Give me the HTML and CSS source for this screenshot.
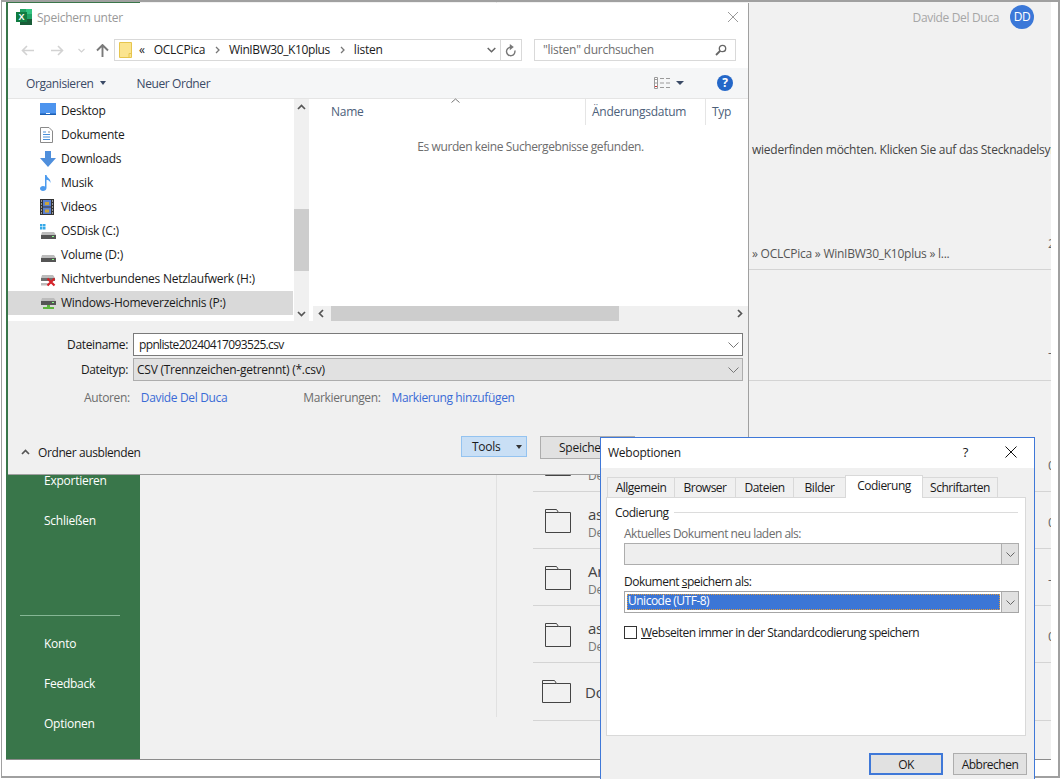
FILE: index.html
```html
<!DOCTYPE html>
<html lang="de">
<head>
    <meta charset="UTF-8">
    <meta name="viewport" content="width=device-width, initial-scale=1.0">
    <title>Speichern unter</title>
    <link rel="stylesheet" href="styles.css">
</head>
<body>
<div class="desktop">
    <div class="screen-frame"></div>

    <!-- Excel Backstage hinter den Dialogen -->
    <div class="backstage">
        <aside class="side">
            <div class="side-top">
                <a class="side-link">Exportieren</a>
                <a class="side-link">Schließen</a>
            </div>
            <div class="side-bottom">
                <a class="side-link">Konto</a>
                <a class="side-link">Feedback</a>
                <a class="side-link">Optionen</a>
            </div>
        </aside>
        <main class="main">
            <div class="places"></div>
            <div class="recent">
                <div class="account">
                    <span class="account-name">Davide Del Duca</span>
                    <span class="avatar">DD</span>
                </div>
                <p class="hint">wiederfinden möchten. Klicken Sie auf das Stecknadelsymbol</p>
                <div class="row row-path">
                    <span class="path">» OCLCPica » WinIBW30_K10plus » l...</span>
                    <span class="date">23.04.2024</span>
                </div>
                <div class="row row-tall"><span class="date">- -</span></div>
                <div class="row row-gap"></div>
                <div class="row">
                    <svg class="folder" viewBox="0 0 26 24"><path d="M.5 23.5V.5h11l2 3h12v20z" fill="none" stroke="#444"/><path d="M.5 3.5h13" stroke="#444"/></svg>
                    <div class="row-text"><div class="row-name">as</div><div class="row-meta">De</div></div>
                    <span class="date">04.04.2024</span>
                </div>
                <div class="row">
                    <svg class="folder" viewBox="0 0 26 24"><path d="M.5 23.5V.5h11l2 3h12v20z" fill="none" stroke="#444"/><path d="M.5 3.5h13" stroke="#444"/></svg>
                    <div class="row-text"><div class="row-name">as</div><div class="row-meta">De</div></div>
                    <span class="date">04.04.2024</span>
                </div>
                <div class="row">
                    <svg class="folder" viewBox="0 0 26 24"><path d="M.5 23.5V.5h11l2 3h12v20z" fill="none" stroke="#444"/><path d="M.5 3.5h13" stroke="#444"/></svg>
                    <div class="row-text"><div class="row-name">Ar</div><div class="row-meta">De</div></div>
                    <span class="date">- -</span>
                </div>
                <div class="row">
                    <svg class="folder" viewBox="0 0 26 24"><path d="M.5 23.5V.5h11l2 3h12v20z" fill="none" stroke="#444"/><path d="M.5 3.5h13" stroke="#444"/></svg>
                    <div class="row-text"><div class="row-name">as</div><div class="row-meta">De</div></div>
                    <span class="date">04.04.2024</span>
                </div>
                <div class="row row-last">
                    <svg class="folder folder-big" viewBox="0 0 29 23"><path d="M.5 22.5V.5h12l2 3h14v19z" fill="none" stroke="#444"/><path d="M.5 3.5h14" stroke="#444"/></svg>
                    <div class="row-name">Do</div>
                </div>
            </div>
        </main>
    </div>

    <!-- Speichern unter -->
    <section class="save-dialog">
        <header class="save-title">
            <svg class="excel-icon" width="16" height="16" viewBox="0 0 16 16">
                <rect x="4" y="0" width="12" height="16" fill="#21a366"/>
                <rect x="10" y="0" width="6" height="5" fill="#33c481"/>
                <rect x="4" y="10" width="12" height="6" fill="#185c37"/>
                <rect x="0" y="3" width="11" height="10" fill="#107c41"/>
                <text x="5.5" y="11.2" text-anchor="middle" class="excel-x">X</text>
            </svg>
            <span class="save-title-text">Speichern unter</span>
            <svg class="close-light" width="12" height="12" viewBox="0 0 12 12"><path d="M1 1l10 10M11 1L1 11" stroke="#9a9a9a" fill="none"/></svg>
        </header>

        <div class="nav-bar">
            <div class="nav-buttons">
                <svg width="13" height="11" viewBox="0 0 13 11"><path d="M6 1L1.500 5.500 6 10M2 5.500h11" stroke="#d2d2d2" stroke-width="1.600" fill="none"/></svg>
                <svg width="13" height="11" viewBox="0 0 13 11"><path d="M7 1l4.500 4.500L7 10M11 5.500H0" stroke="#d2d2d2" stroke-width="1.600" fill="none"/></svg>
                <svg width="7" height="5" viewBox="0 0 7 5"><path d="M.5 1l3 3 3-3" stroke="#d2d2d2" stroke-width="1.200" fill="none"/></svg>
                <svg width="13" height="13" viewBox="0 0 13 13"><path d="M1 6.500l5.500-5.500 5.500 5.500M6.500 1.500V13" stroke="#7a7a7a" stroke-width="1.900" fill="none"/></svg>
            </div>
            <div class="address">
                <svg class="address-folder" width="13" height="16" viewBox="0 0 13 16"><path d="M.5.500h12v15H.5z" fill="#fbe48f" stroke="#e6c54e"/><path d="M10 15.500v-4h2.500" fill="none" stroke="#e6c54e"/></svg>
                <span class="crumb-more">«</span>
                <span class="crumb">OCLCPica</span>
                <svg class="crumb-sep" width="5" height="8" viewBox="0 0 5 8"><path d="M1 1l3 3-3 3" stroke="#777" stroke-width="1.300" fill="none"/></svg>
                <span class="crumb crumb-long">WinIBW30_K10plus</span>
                <svg class="crumb-sep" width="5" height="8" viewBox="0 0 5 8"><path d="M1 1l3 3-3 3" stroke="#777" stroke-width="1.300" fill="none"/></svg>
                <span class="crumb">listen</span>
                <svg class="address-drop" width="9" height="6" viewBox="0 0 9 6"><path d="M.7 1l3.800 3.800L8.300 1" stroke="#666" stroke-width="1.500" fill="none"/></svg>
                <span class="address-refresh">
                    <svg width="12" height="13" viewBox="0 0 12 13"><path d="M9.800 6.500A4.200 4.200 0 1 1 5.600 3.300" stroke="#777" stroke-width="1.400" fill="none"/><path d="M4.800 0l4 3.100-4 3.100z" fill="#777"/></svg>
                </span>
            </div>
            <div class="search">
                <span class="search-text">"listen" durchsuchen</span>
                <svg width="12" height="12" viewBox="0 0 12 12"><circle cx="7.500" cy="4.500" r="3.200" stroke="#666" stroke-width="1.300" fill="none"/><path d="M5 7L1 11" stroke="#666" stroke-width="1.800"/></svg>
            </div>
        </div>

        <div class="toolbar">
            <span class="tool-item">Organisieren<span class="caret"></span></span>
            <span class="tool-item tool-new">Neuer Ordner</span>
            <svg class="view-icon" width="16" height="12" viewBox="0 0 16 12">
                <path d="M.5.500h3v11h-3z" fill="#fff" stroke="#9a9a9a"/>
                <path d="M1 2.500h2M1 6h2" stroke="#9a9a9a"/><path d="M1 9.500h2" stroke="#c33"/>
                <path d="M6 1.500h4M12 1.500h4M6 6h4M12 6h4M6 10.500h4M12 10.500h4" stroke="#9a9a9a"/>
            </svg>
            <span class="caret caret-view"></span>
            <span class="help">?</span>
        </div>

        <div class="browser">
            <nav class="tree">
                <div class="tree-row">
                    <svg width="16" height="12" viewBox="0 0 16 12"><rect width="16" height="11" fill="#4d94ee"/><rect y="10.500" width="16" height="1.500" fill="#1d5fb3"/><rect x="6" y="10" width="4" height="1" fill="#fff"/></svg>
                    <span>Desktop</span>
                </div>
                <div class="tree-row">
                    <svg width="13" height="16" viewBox="0 0 13 16"><path d="M.5.500h8.500l3.500 3.500v11.500H.5z" fill="#fff" stroke="#8a8a8a"/><path d="M3 5h3M3 7.500h7M3 10h7M3 12.500h7" stroke="#4a90d9"/><path d="M8 5h2" stroke="#8a8a8a"/></svg>
                    <span>Dokumente</span>
                </div>
                <div class="tree-row">
                    <svg width="16" height="16" viewBox="0 0 16 16"><path d="M5 0h6v7h5l-8 9-8-9h5z" fill="#4f8fdc"/></svg>
                    <span>Downloads</span>
                </div>
                <div class="tree-row">
                    <svg width="12" height="16" viewBox="0 0 12 16"><path d="M5 0h1.500c.5 3 4.500 3.500 4 8-.8-2.500-2.500-3-4-3.300V13c0 2-1.800 3-3.500 3S0 15 0 13.500 1.500 11 3 11c.8 0 1.500.2 2 .5z" fill="#4d9bee"/></svg>
                    <span>Musik</span>
                </div>
                <div class="tree-row">
                    <svg width="14" height="16" viewBox="0 0 14 16"><rect width="14" height="16" fill="#333"/><rect x="3" y="1" width="8" height="6.500" fill="#5a7fd0"/><rect x="3" y="8.500" width="8" height="6.500" fill="#5a7fd0"/><path d="M5 3h4v3H5zM5 10.500h4v3H5z" fill="#c9a33b"/><path d="M1 2h1M1 5h1M1 8h1M1 11h1M1 14h1M12 2h1M12 5h1M12 8h1M12 11h1M12 14h1" stroke="#fff"/></svg>
                    <span>Videos</span>
                </div>
                <div class="tree-row">
                    <svg width="16" height="16" viewBox="0 0 16 16"><path d="M0 1h2.500v2.500H0zM3 1h2.500v2.500H3zM0 4h2.500v2.500H0zM3 4h2.500v2.500H3z" fill="#35a9e8"/><path d="M2 9h12l2 3H1z" fill="#bcbcbc"/><rect x="1" y="12" width="15" height="4" fill="#555"/><rect x="12" y="13" width="2" height="1" fill="#8f8"/></svg>
                    <span>OSDisk (C:)</span>
                </div>
                <div class="tree-row">
                    <svg width="16" height="16" viewBox="0 0 16 16"><path d="M2 8h12l2 3H1z" fill="#bcbcbc"/><rect x="1" y="11" width="15" height="4" fill="#555"/><rect x="12" y="12" width="2" height="1" fill="#8f8"/></svg>
                    <span>Volume (D:)</span>
                </div>
                <div class="tree-row">
                    <svg width="16" height="16" viewBox="0 0 16 16"><path d="M2 4h11l2 3H1z" fill="#bcbcbc"/><rect x="1" y="7" width="14" height="3" fill="#6e6e6e"/><rect x="1" y="12" width="8" height="2.500" fill="#bcbcbc"/><path d="M7.500 7.500l7 7M14.500 7.500l-7 7" stroke="#d5232a" stroke-width="2.200"/></svg>
                    <span>Nichtverbundenes Netzlaufwerk (H:)</span>
                </div>
                <div class="tree-row tree-row-on">
                    <svg width="16" height="16" viewBox="0 0 16 16"><path d="M2 3h12l2 3H1z" fill="#bcbcbc"/><rect x="1" y="6" width="15" height="4" fill="#555"/><rect x="12" y="7" width="2" height="1" fill="#8f8"/><path d="M7 10h3v2h4v2H3v-2h4z" fill="#5db53e"/></svg>
                    <span>Windows-Homeverzeichnis (P:)</span>
                </div>
            </nav>
            <div class="vscroll">
                <svg class="vscroll-up" width="9" height="6" viewBox="0 0 9 6"><path d="M1 5l3.500-3.500L8 5" stroke="#555" stroke-width="1.700" fill="none"/></svg>
                <div class="vscroll-thumb"></div>
                <svg class="vscroll-down" width="9" height="6" viewBox="0 0 9 6"><path d="M1 1l3.500 3.500L8 1" stroke="#555" stroke-width="1.700" fill="none"/></svg>
            </div>
            <div class="list">
                <div class="list-head">
                    <span class="col col-name">Name<svg class="sort" width="9" height="5" viewBox="0 0 9 5"><path d="M.5 4.500l4-3.500 4 3.500" stroke="#777" fill="none"/></svg></span>
                    <span class="col col-date">Änderungsdatum</span>
                    <span class="col col-type">Typ</span>
                </div>
                <p class="list-empty">Es wurden keine Suchergebnisse gefunden.</p>
                <div class="hscroll">
                    <svg width="6" height="9" viewBox="0 0 6 9"><path d="M5 1L1.500 4.500 5 8" stroke="#555" stroke-width="1.700" fill="none"/></svg>
                    <div class="hscroll-track"><div class="hscroll-thumb"></div></div>
                    <svg width="6" height="9" viewBox="0 0 6 9"><path d="M1 1l3.500 3.500L1 8" stroke="#555" stroke-width="1.700" fill="none"/></svg>
                </div>
            </div>
        </div>

        <div class="save-form">
            <div class="form-row">
                <label class="form-label">Dateiname:</label>
                <div class="file-input"><span class="file-name">ppnliste20240417093525.csv</span>
                    <svg width="11" height="6" viewBox="0 0 11 6"><path d="M.5.500l5 5 5-5" stroke="#777" fill="none"/></svg>
                </div>
            </div>
            <div class="form-row">
                <label class="form-label">Dateityp:</label>
                <div class="file-input file-type">CSV (Trennzeichen-getrennt) (*.csv)
                    <svg width="11" height="6" viewBox="0 0 11 6"><path d="M.5.500l5 5 5-5" stroke="#777" fill="none"/></svg>
                </div>
            </div>
            <div class="meta-row">
                <span class="meta-label">Autoren:</span>
                <a class="meta-link">Davide Del Duca</a>
                <span class="meta-label meta-tags">Markierungen:</span>
                <a class="meta-link">Markierung hinzufügen</a>
            </div>
            <div class="save-foot">
                <span class="toggle-folders">
                    <svg width="9" height="6" viewBox="0 0 9 6"><path d="M1 5l3.500-3.500L8 5" stroke="#555" stroke-width="1.700" fill="none"/></svg>
                    Ordner ausblenden
                </span>
                <button class="btn-tools">Tools<span class="caret"></span></button>
                <button class="btn btn-save">Speichern</button>
            </div>
        </div>
    </section>

    <!-- Weboptionen -->
    <section class="web-dialog">
        <header class="web-title">
            <span>Weboptionen</span>
            <span class="web-help">?</span>
            <svg width="12" height="12" viewBox="0 0 12 12"><path d="M.5.500l11 11M11.500.500l-11 11" stroke="#111" fill="none"/></svg>
        </header>
        <div class="tabs">
            <span class="tab">Allgemein</span>
            <span class="tab">Browser</span>
            <span class="tab">Dateien</span>
            <span class="tab">Bilder</span>
            <span class="tab tab-on">Codierung</span>
            <span class="tab">Schriftarten</span>
        </div>
        <div class="panel">
            <div class="group-head"><span>Codierung</span></div>
            <div class="group-body">
                <label class="select-label select-label-off">Aktuelles Dokument neu laden als:</label>
                <div class="select select-off">
                    <span class="select-value"></span>
                    <span class="select-arrow"><svg width="9" height="5" viewBox="0 0 9 5"><path d="M.5.500l4 4 4-4" stroke="#666" fill="none"/></svg></span>
                </div>
                <label class="select-label select-label-save">Dokument <u>s</u>peichern als:</label>
                <div class="select">
                    <span class="select-value select-value-on">Unicode (UTF-8)</span>
                    <span class="select-arrow"><svg width="9" height="5" viewBox="0 0 9 5"><path d="M.5.500l4 4 4-4" stroke="#666" fill="none"/></svg></span>
                </div>
                <label class="check-row">
                    <span class="check"></span>
                    <span><u>W</u>ebseiten immer in der Standardcodierung speichern</span>
                </label>
            </div>
        </div>
        <div class="web-foot">
            <button class="btn btn-wide btn-default">OK</button>
            <button class="btn btn-wide">Abbrechen</button>
        </div>
    </section>
</div>
</body>
</html>
```

FILE: styles.css
```css
* {
    box-sizing: border-box;
}

html, body {
    margin: 0;
    padding: 0;
}

body {
    font-family: "Open Sans", "Noto Sans", sans-serif;
    font-size: 12px;
    letter-spacing: -0.25px;
    color: #1a1a1a;
    background-color: #fff;
}

p {
    margin: 0;
}

button {
    font: inherit;
    letter-spacing: inherit;
    color: inherit;
}

.desktop {
    position: relative;
    width: 1060px;
    height: 779px;
    overflow: hidden;
    background-color: #fff;
}

.screen-frame {
    position: absolute;
    left: 1px;
    top: 0;
    right: 0;
    bottom: 1px;
    border-style: solid;
    border-color: #a0a0a0;
    border-width: 2px 2px 2px 1px;
}

/* Backstage */
.backstage {
    position: absolute;
    left: 6px;
    top: 2px;
    width: 1045px;
    height: 758px;
    display: flex;
    overflow: hidden;
    background-color: #f1f1f1;
    border-bottom: 1px solid #8c8c8c;
}

.side {
    width: 134px;
    flex: none;
    display: flex;
    flex-direction: column;
    background-color: #39764a;
    color: #fff;
    padding-top: 459px;
}

.side-link {
    display: block;
    height: 40px;
    line-height: 40px;
    padding-left: 38px;
}

.side-top {
    height: 154px;
}

.side-bottom {
    margin-left: 14px;
    width: 100px;
    border-top: 1px solid #86b795;
    padding-top: 8px;
}

.side-bottom .side-link {
    padding-left: 24px;
    width: 134px;
}

.main {
    flex: 1;
    display: flex;
    min-width: 0;
}

.places {
    width: 357px;
    height: 715px;
    flex: none;
    border-right: 1px solid #e1e1e1;
}

.recent {
    flex: 1;
    min-width: 0;
    padding-left: 36px;
}

.account {
    height: 30px;
    display: flex;
    justify-content: flex-end;
    align-items: center;
    gap: 11px;
    padding-right: 17px;
    color: #a6a6a6;
    letter-spacing: -0.35px;
}

.avatar {
    width: 24px;
    height: 24px;
    border-radius: 50%;
    background-color: #3b78d8;
    color: #fff;
    text-align: center;
    line-height: 24px;
}

.hint {
    margin-top: 109px;
    margin-left: 219px;
    height: 18px;
    line-height: 18px;
    white-space: nowrap;
    color: #444;
}

.row {
    height: 57px;
    display: flex;
    align-items: center;
    border-bottom: 1px solid #d4d4d4;
    white-space: nowrap;
    position: relative;
}

.row-path {
    height: 111px;
    align-items: flex-end;
    padding-bottom: 6px;
}

.path {
    color: #555;
    margin-left: 219px;
    line-height: 18px;
}

.row-tall {
    height: 111px;
    padding-top: 50px;
}

.row-gap {
    height: 54px;
    border-bottom: 0;
}

.date {
    margin-left: auto;
    width: 3px;
    overflow: hidden;
    flex: none;
    font-size: 13px;
    color: #666;
    position: relative;
    top: 2px;
}

.row-path .date {
    position: absolute;
    right: 0;
    top: 75px;
}

.folder {
    width: 26px;
    height: 24px;
    flex: none;
    margin-top: 2px;
    margin-left: 12px;
    margin-right: 17px;
}

.folder-big {
    width: 29px;
    height: 23px;
    margin-top: 0;
    margin-left: 9px;
    margin-right: 14px;
}

.row-text {
    padding-top: 4px;
}

.row-name {
    font-size: 15px;
    color: #444;
    line-height: 20px;
}

.row-meta {
    color: #777;
    line-height: 16px;
    margin-top: 1px;
}

.row-last {
    height: 58px;
}

/* Speichern unter */
.save-dialog {
    position: absolute;
    left: 8px;
    top: 3px;
    width: 741px;
    height: 472px;
    display: flex;
    flex-direction: column;
    background-color: #fff;
    border-right: 1px solid #a0a0a0;
    border-bottom: 1px solid #a0a0a0;
}

.save-title {
    height: 28px;
    flex: none;
    display: flex;
    align-items: center;
    padding-left: 8px;
    padding-right: 9px;
    gap: 5px;
}

.excel-x {
    font-family: "Liberation Sans", sans-serif;
    font-size: 9px;
    font-weight: bold;
    fill: #fff;
}

.save-title-text {
    color: #999;
}

.close-light {
    margin-left: auto;
}

.nav-bar {
    height: 22px;
    flex: none;
    margin-top: 8px;
    margin-bottom: 7px;
    display: flex;
    align-items: center;
}

.nav-buttons {
    width: 106px;
    flex: none;
    padding-left: 13px;
    display: flex;
    align-items: center;
    gap: 17px;
}

.nav-buttons svg:nth-child(3) {
    margin-left: -3px;
}

.nav-buttons svg:nth-child(4) {
    margin-left: -6px;
}

.address {
    width: 408px;
    height: 22px;
    flex: none;
    display: flex;
    align-items: center;
    border: 1px solid #d9d9d9;
    padding-left: 4px;
    color: #1a1a1a;
}

.address-folder {
    margin-right: 7px;
}

.crumb-more {
    margin-right: 9px;
    margin-top: -2px;
}

.crumb {
    margin-top: -2px;
}

.crumb-long {
    letter-spacing: -0.4px;
}

.crumb-sep {
    margin: 0 9px 0 10px;
}

.address-drop {
    margin-left: auto;
    margin-right: 4px;
}

.address-refresh {
    width: 21px;
    height: 20px;
    border-left: 1px solid #d9d9d9;
    display: flex;
    align-items: center;
    justify-content: center;
}

.search {
    width: 202px;
    height: 22px;
    flex: none;
    margin-left: 12px;
    display: flex;
    align-items: center;
    justify-content: space-between;
    border: 1px solid #d9d9d9;
    padding: 0 8px;
    color: #6d6d6d;
}

.search-text {
    margin-top: -2px;
}

.toolbar {
    height: 31px;
    flex: none;
    display: flex;
    align-items: center;
    background-color: #f5f6f7;
    border-bottom: 1px solid #e5e5e5;
    padding-left: 18px;
    padding-right: 15px;
    color: #3a4a66;
    letter-spacing: -0.4px;
}

.tool-item {
    display: flex;
    align-items: center;
}

.tool-new {
    margin-left: 31px;
}

.caret {
    display: inline-block;
    width: 0;
    height: 0;
    margin-left: 6px;
    border-left: 3.5px solid transparent;
    border-right: 3.5px solid transparent;
    border-top: 4px solid #3a4a66;
}

.view-icon {
    margin-left: auto;
}

.caret-view {
    margin-left: 6px;
    border-left-width: 4px;
    border-right-width: 4px;
}

.help {
    width: 16px;
    height: 16px;
    margin-left: 33px;
    border-radius: 50%;
    background-color: #2467c8;
    color: #fff;
    font-weight: bold;
    font-size: 12px;
    line-height: 16px;
    text-align: center;
}

.browser {
    height: 222px;
    flex: none;
    display: flex;
    background-color: #fff;
}

.tree {
    width: 285px;
    flex: none;
}

.tree-row {
    height: 24px;
    display: flex;
    align-items: center;
    padding-left: 32px;
    padding-bottom: 2px;
    position: relative;
    color: #1a1a1a;
}

.tree-row svg {
    position: absolute;
    left: 32px;
    top: 4px;
}

.tree-row span {
    margin-left: 21px;
    white-space: nowrap;
}

.tree-row-on {
    background-color: #d9d9d9;
}

.vscroll {
    width: 15px;
    margin-left: 1px;
    flex: none;
    background-color: #f0f0f0;
    display: flex;
    flex-direction: column;
    align-items: center;
    padding-top: 5px;
}

.vscroll-thumb {
    width: 15px;
    height: 62px;
    margin-top: 99px;
    background-color: #cdcdcd;
}

.vscroll-down {
    margin-top: auto;
    margin-bottom: 4px;
}

.list {
    width: 435px;
    margin-left: 4px;
    flex: none;
    display: flex;
    flex-direction: column;
}

.list-head {
    height: 26px;
    flex: none;
    display: flex;
    align-items: center;
    color: #4c607a;
}

.col {
    height: 26px;
    line-height: 26px;
    white-space: nowrap;
    position: relative;
}

.col-name {
    width: 273px;
    padding-left: 18px;
    border-right: 1px solid #e5e5e5;
}

.sort {
    position: absolute;
    left: 138px;
    top: -1px;
}

.col-date {
    width: 120px;
    padding-left: 6px;
    border-right: 1px solid #e5e5e5;
}

.col-type {
    padding-left: 6px;
}

.list-empty {
    flex: 1;
    padding-top: 13px;
    text-align: center;
    color: #6d6d6d;
    letter-spacing: -0.4px;
}

.hscroll {
    height: 15px;
    flex: none;
    display: flex;
    align-items: center;
    background-color: #f0f0f0;
    padding: 0 5px;
}

.hscroll-track {
    flex: 1;
    height: 15px;
    margin: 0 7px;
}

.hscroll-thumb {
    width: 288px;
    height: 15px;
    background-color: #cdcdcd;
}

.save-form {
    flex: 1;
    background-color: #f0f0f0;
    padding-top: 12px;
}

.form-row {
    display: flex;
    align-items: center;
    height: 23px;
    margin-bottom: 2px;
}

.form-label {
    width: 120px;
    text-align: right;
    margin-right: 5px;
    flex: none;
    letter-spacing: -0.35px;
}

.file-input {
    width: 610px;
    height: 23px;
    display: flex;
    align-items: center;
    justify-content: space-between;
    background-color: #fff;
    border: 1px solid #7a7a7a;
    padding: 0 3px 0 5px;
}

.file-name {
    letter-spacing: -0.65px;
}

.file-type {
    background-color: #e1e1e1;
    border-color: #adadad;
    padding-left: 3px;
}

.meta-row {
    display: flex;
    align-items: center;
    height: 18px;
    margin-top: 7px;
    padding-left: 76px;
    letter-spacing: -0.35px;
}

.meta-label {
    color: #6d6d6d;
}

.meta-tags {
    margin-left: 76px;
}

.meta-link {
    margin-left: 11px;
    color: #3a6bd6;
}

.save-foot {
    display: flex;
    align-items: flex-start;
    height: 38px;
    margin-top: 30px;
}

.toggle-folders {
    display: flex;
    align-items: center;
    gap: 8px;
    height: 18px;
    margin-top: 7px;
    padding-left: 13px;
    width: 453px;
    letter-spacing: -0.4px;
}

.btn-tools {
    width: 66px;
    height: 21px;
    display: flex;
    align-items: center;
    justify-content: space-between;
    padding: 0 4px 0 10px;
    background-color: #c9dff5;
    border: 1px solid #94c3f0;
}

.btn-tools .caret {
    border-top-color: #333;
}

.btn {
    width: 75px;
    height: 23px;
    padding: 0;
    background-color: #e1e1e1;
    border: 1px solid #adadad;
}

.btn-save {
    width: 95px;
    height: 23px;
    margin-left: 13px;
    padding-left: 18px;
    text-align: left;
}

/* Weboptionen */
.web-dialog {
    position: absolute;
    left: 600px;
    top: 437px;
    width: 435px;
    height: 342px;
    background-color: #f0f0f0;
    border: 1px solid #3f78d8;
    border-bottom: 0;
    letter-spacing: -0.5px;
}

.web-title {
    height: 30px;
    display: flex;
    align-items: center;
    padding-left: 7px;
    padding-right: 17px;
    padding-bottom: 2px;
    background-color: #fff;
    letter-spacing: -0.25px;
}

.web-help {
    margin-left: auto;
    margin-right: 37px;
    font-size: 13px;
}

.tabs {
    display: flex;
    align-items: flex-end;
    height: 29px;
    padding-left: 7px;
}

.tab {
    width: 68px;
    height: 20px;
    line-height: 20px;
    text-align: center;
    border: 1px solid #d9d9d9;
    border-bottom: 0;
    margin-left: -1px;
    white-space: nowrap;
}

.tab:nth-child(2) {
    width: 62px;
}

.tab:nth-child(3) {
    width: 59px;
}

.tab:nth-child(4) {
    width: 53px;
}

.tab:nth-child(5) {
    width: 78px;
}

.tab:nth-child(6) {
    width: 76px;
}

.tab-on {
    height: 23px;
    background-color: #fff;
    position: relative;
    top: 1px;
    z-index: 1;
}

.panel {
    width: 420px;
    height: 239px;
    margin-left: 5px;
    background-color: #fff;
    border: 1px solid #d9d9d9;
}

.group-head {
    display: flex;
    align-items: center;
    gap: 5px;
    padding: 5px 7px 0 8px;
    height: 23px;
}

.group-head::after {
    content: "";
    flex: 1;
    height: 1px;
    background-color: #dcdcdc;
}

.group-body {
    padding: 5px 6px 0 17px;
}

.select-label {
    display: block;
    height: 16px;
    line-height: 16px;
}

.select-label-off {
    color: #6d6d6d;
    margin-bottom: 1px;
}

.select-label-save {
    margin-top: 9px;
    margin-bottom: 1px;
}

.select {
    width: 395px;
    height: 22px;
    display: flex;
    background-color: #fff;
    border: 1px solid #a6a6a6;
    padding: 2px;
    position: relative;
}

.select-off {
    background-color: #eee;
    border-color: #adadad;
}

.select-value {
    flex: 1;
    line-height: 14px;
}

.select-value-on {
    background-color: #3c76d6;
    color: #fff;
    padding-left: 1px;
    outline: 1px dotted #e09a3c;
    outline-offset: -1px;
}

.select-arrow {
    width: 17px;
    margin: -2px -2px -2px 1px;
    display: flex;
    align-items: center;
    justify-content: center;
    background-color: #e1e1e1;
    border-left: 1px solid #adadad;
}

.check-row {
    display: flex;
    align-items: center;
    gap: 4px;
    margin-top: 12px;
    height: 14px;
    white-space: nowrap;
}

.check {
    width: 13px;
    height: 13px;
    background-color: #fff;
    border: 1px solid #333;
}

.web-foot {
    display: flex;
    justify-content: flex-end;
    gap: 10px;
    margin-top: 17px;
    padding-right: 7px;
}

.btn-wide {
    width: 74px;
    height: 22px;
}

.btn-default {
    border: 2px solid #3f78d8;
}
```
